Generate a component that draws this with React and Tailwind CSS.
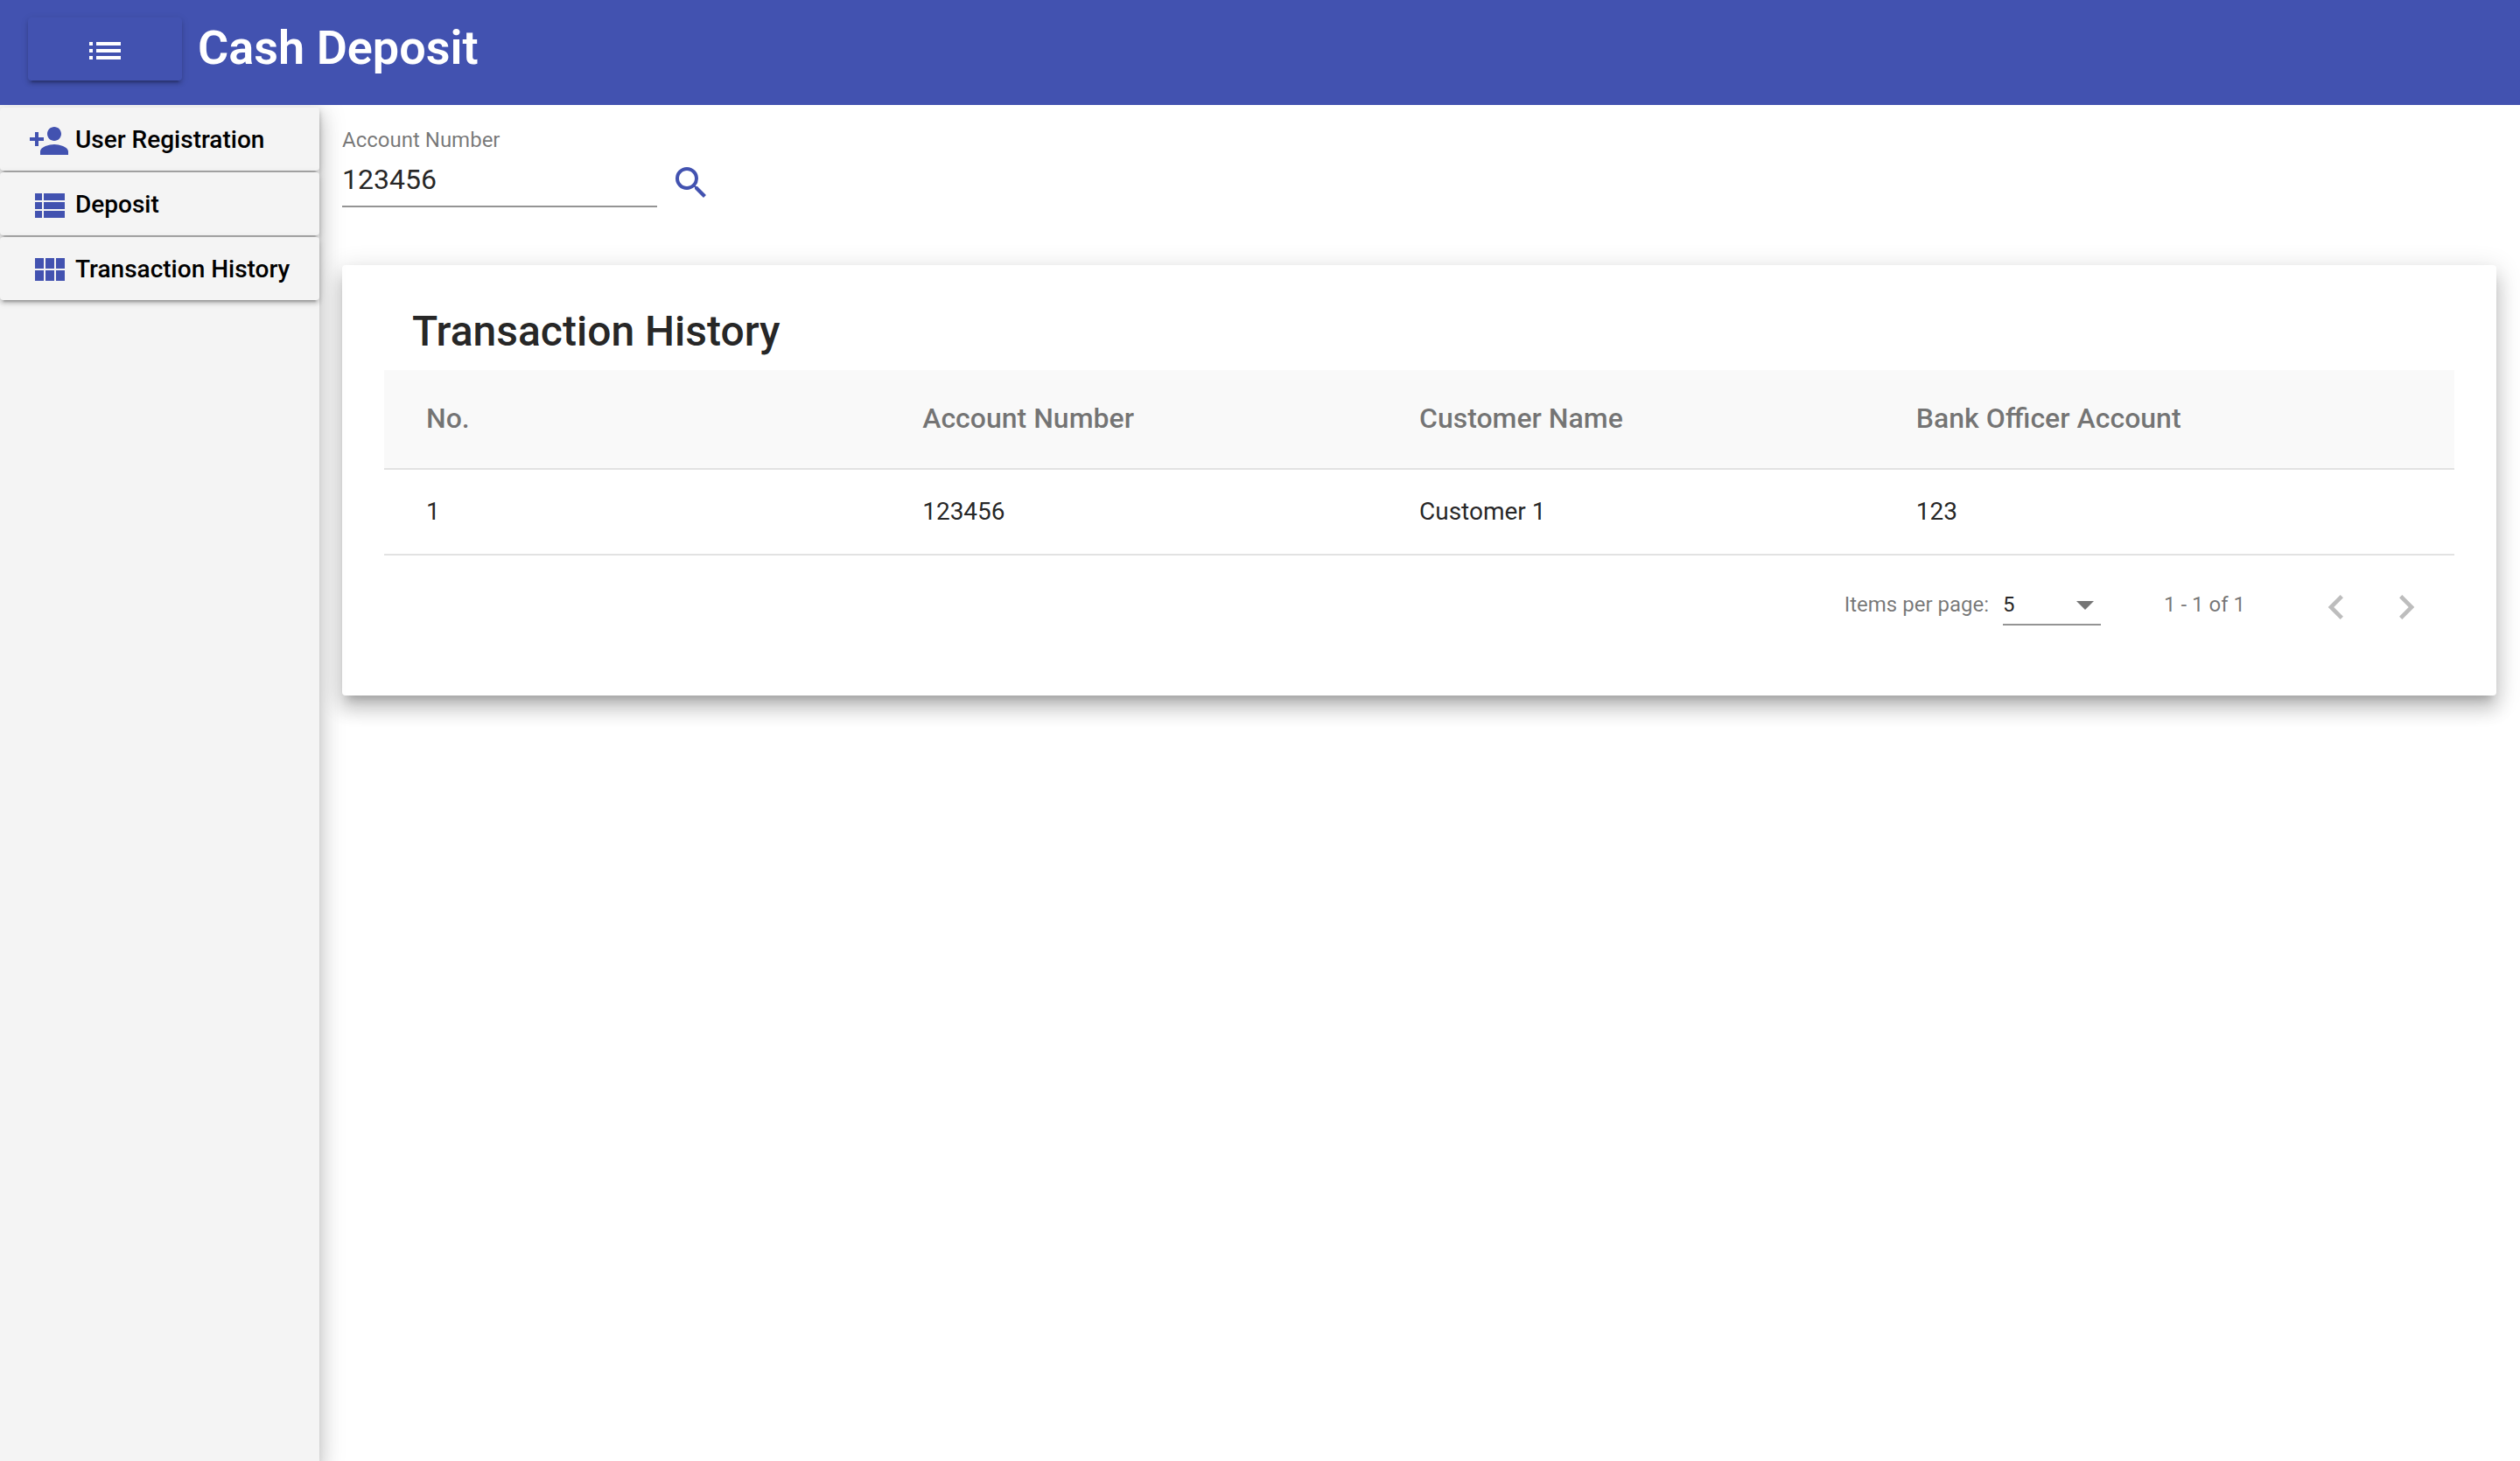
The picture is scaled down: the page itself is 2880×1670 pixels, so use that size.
import { useState } from "react";
import { MdChevronLeft, MdChevronRight, MdList, MdPersonAdd, MdSearch } from "react-icons/md";

function ViewListIcon({ className }) {
  return (
    <svg viewBox="0 0 24 24" fill="currentColor" aria-hidden="true" className={className}>
      <path d="M4 14h4v-4H4v4zm0 5h4v-4H4v4zM4 9h4V5H4v4zm5 5h12v-4H9v4zm0 5h12v-4H9v4zM9 5v4h12V5H9z" />
    </svg>
  );
}

function ViewModuleIcon({ className }) {
  return (
    <svg viewBox="0 0 24 24" fill="currentColor" aria-hidden="true" className={className}>
      <path d="M4 11h5V5H4v6zm0 7h5v-6H4v6zm6 0h5v-6h-5v6zm6 0h5v-6h-5v6zm-6-7h5V5h-5v6zm6-6v6h5V5h-5z" />
    </svg>
  );
}

const navItems = [
  { label: "User Registration", Icon: MdPersonAdd },
  { label: "Deposit", Icon: ViewListIcon },
  { label: "Transaction History", Icon: ViewModuleIcon },
];

const columns = ["No.", "Account Number", "Customer Name", "Bank Officer Account"];
const rows = [["1", "123456", "Customer 1", "123"]];

const buttonShadow =
  "shadow-[0_6px_2px_-4px_rgba(0,0,0,0.2),0_4px_4px_0_rgba(0,0,0,0.14),0_2px_10px_0_rgba(0,0,0,0.12)]";
const panelShadow =
  "shadow-[0_10px_10px_-6px_rgba(0,0,0,0.2),0_16px_20px_2px_rgba(0,0,0,0.14),0_6px_28px_4px_rgba(0,0,0,0.12)]";

function Header() {
  return (
    <header className="flex h-[120px] shrink-0 items-start gap-[18px] bg-[#4252b0] px-8 pt-5 text-white">
      <button
        type="button"
        aria-label="Toggle menu"
        className={`flex h-[72px] w-44 items-center justify-center rounded-[4px] bg-[#4252b0] pt-1 ${buttonShadow}`}
      >
        <MdList className="size-12" />
      </button>
      <h1 className="text-[54px] leading-[70px] font-semibold">Cash Deposit</h1>
    </header>
  );
}

function Sidebar() {
  return (
    <nav className={`z-10 flex w-[365px] shrink-0 flex-col gap-0.5 bg-[#f4f4f4] pt-[3px] ${panelShadow}`}>
      {navItems.map(({ label, Icon }) => (
        <button
          key={label}
          type="button"
          className={`flex h-[72px] w-full items-center gap-1.5 rounded-[4px] bg-[#f4f4f4] px-8 pt-0.5 text-[28px] leading-9 font-medium whitespace-nowrap text-black ${buttonShadow}`}
        >
          <Icon className="mt-0.5 size-12 shrink-0 text-[#4252b0]" />
          {label}
        </button>
      ))}
    </nav>
  );
}

function AccountSearch() {
  const [account, setAccount] = useState("123456");
  return (
    <form className="flex items-end gap-[15px]" onSubmit={(e) => e.preventDefault()}>
      <div className="flex w-[360px] flex-col border-b-2 border-[#949494]">
        <label htmlFor="account" className="text-[24px] leading-[30px] text-black/54">
          Account Number
        </label>
        <input
          id="account"
          value={account}
          onChange={(e) => setAccount(e.target.value)}
          className="mt-3 mb-3 h-9 w-full bg-transparent text-[32px] leading-9 text-black/87 outline-none"
        />
      </div>
      <button type="submit" aria-label="Search" className="mb-1 text-[#4252b0]">
        <MdSearch className="size-12" />
      </button>
    </form>
  );
}

function HistoryTable() {
  return (
    <table className="w-full table-fixed border-separate border-spacing-0 text-left">
      <thead className="bg-[#f9f9f9] text-[32px] text-black/54">
        <tr className="h-[114px]">
          {columns.map((column) => (
            <th
              key={column}
              scope="col"
              className="w-[24%] border-b-2 border-[#e2e2e2] pb-0.5 font-medium first:w-[26%] first:pl-12 last:w-[26%] last:pr-12"
            >
              {column}
            </th>
          ))}
        </tr>
      </thead>
      <tbody className="text-[28px] text-black/87">
        {rows.map((row) => (
          <tr key={row[0]} className="h-[98px]">
            {row.map((cell, i) => (
              <td key={columns[i]} className="border-b-2 border-[#e2e2e2] first:pl-12 last:pr-12">
                {cell}
              </td>
            ))}
          </tr>
        ))}
      </tbody>
    </table>
  );
}

function Paginator() {
  return (
    <div className="flex h-28 items-center justify-end pr-[15px] text-[24px] leading-7 text-black/54">
      <label htmlFor="page-size">Items per page:</label>
      <div className="relative mt-2 ml-4 w-28 border-b-2 border-[#949494] pb-1.5">
        <select
          id="page-size"
          defaultValue="5"
          className="block h-8 w-full appearance-none bg-transparent text-black/87 outline-none"
        >
          <option>5</option>
          <option>10</option>
          <option>20</option>
        </select>
        <svg
          viewBox="0 0 20 10"
          aria-hidden="true"
          className="pointer-events-none absolute top-3 right-2 h-2.5 w-5 fill-[#757575]"
        >
          <path d="M0 0h20L10 10z" />
        </svg>
      </div>
      <span className="ml-[72px]">1 - 1 of 1</span>
      <div className="ml-16 flex pt-1.5 text-[#bdbdbd]">
        <button type="button" aria-label="Previous page" disabled className="flex size-20 items-center justify-center">
          <MdChevronLeft className="size-14" />
        </button>
        <button type="button" aria-label="Next page" disabled className="flex size-20 items-center justify-center">
          <MdChevronRight className="size-14" />
        </button>
      </div>
    </div>
  );
}

export default function App() {
  return (
    <div className="flex min-h-screen flex-col bg-white font-[Roboto,sans-serif]">
      <Header />
      <div className="flex grow overflow-hidden">
        <Sidebar />
        <main className="min-w-0 grow pt-[25px] pr-[27px] pl-[26px]">
          <AccountSearch />
          <section className={`mt-[66px] rounded-[4px] bg-white p-12 ${panelShadow}`}>
            <h2 className="mb-4 pl-8 text-[48px] leading-[56px] font-medium text-black/87">
              Transaction History
            </h2>
            <HistoryTable />
            <Paginator />
          </section>
        </main>
      </div>
    </div>
  );
}
